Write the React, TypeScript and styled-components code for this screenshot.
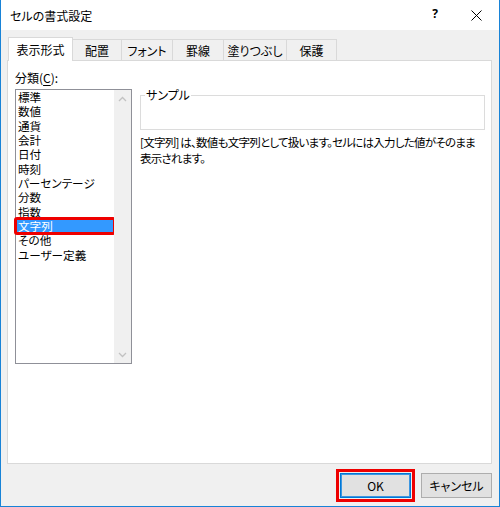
import React from "react";
import styled, { createGlobalStyle } from "styled-components";

const Global = createGlobalStyle`
  html, body { margin: 0; padding: 0; background: #ffffff; }
  body {
    font-family: "Noto Sans CJK JP", "Noto Sans", sans-serif;
    font-size: 12px;
    color: #000000;
  }
  * { box-sizing: border-box; }
`;

const Window = styled.div`
  width: 500px;
  height: 507px;
  display: flex;
  flex-direction: column;
  border: 1px solid #1883d7;
  border-top: none;
  background: #f0f0f0;
  font-feature-settings: "palt";
`;

const TitleBar = styled.div`
  height: 30px;
  flex: none;
  background: #ffffff;
  display: flex;
  align-items: center;
  padding-left: 9px;
`;

const Title = styled.div`
  flex: 1;
  font-size: 12px;
  line-height: 14px;
  margin-top: 1px;
`;

const TitleButton = styled.div<{ $w: number }>`
  width: ${(p) => p.$w}px;
  height: 30px;
  display: flex;
  align-items: center;
  justify-content: center;
`;

const Help = styled.span`
  font-family: "Noto Sans", sans-serif;
  font-size: 12px;
  font-weight: 700;
  line-height: 12px;
  margin-top: -2px;
`;

const Body = styled.div`
  flex: 1;
  display: flex;
  flex-direction: column;
  padding: 7px 7px 8px 6px;
`;

const TabRow = styled.div`
  height: 23px;
  flex: none;
  display: flex;
  align-items: flex-end;
  padding-left: 1px;
`;

const Tab = styled.div<{ $w: number; $active?: boolean }>`
  width: ${(p) => p.$w}px;
  height: ${(p) => (p.$active ? 24 : 21)}px;
  margin-bottom: ${(p) => (p.$active ? -1 : 0)}px;
  position: relative;
  z-index: ${(p) => (p.$active ? 1 : 0)};
  background: ${(p) => (p.$active ? "#ffffff" : "#f0f0f0")};
  border: 1px solid #d9d9d9;
  border-bottom: none;
  border-left: ${(p) => (p.$active ? "1px solid #d9d9d9" : "none")};
  display: flex;
  align-items: center;
  justify-content: center;
  padding-top: ${(p) => (p.$active ? 1 : 2)}px;
  font-size: 12px;
  line-height: 14px;
  white-space: nowrap;
`;

const Panel = styled.div`
  flex: 1;
  background: #ffffff;
  border: 1px solid #d9d9d9;
  display: flex;
  gap: 8px;
  padding: 9px 6px 0 7px;
`;

const LeftCol = styled.div`
  width: 117px;
  flex: none;
  display: flex;
  flex-direction: column;
`;

const Label = styled.div`
  line-height: 15px;
  font-size: 12px;
  white-space: nowrap;
  u { text-decoration: underline; text-underline-offset: 2px; }
`;

const ListBox = styled.div`
  margin-top: 4px;
  height: 275px;
  border: 1px solid #8f9098;
  background: #ffffff;
  display: flex;
`;

const Items = styled.div`
  flex: 1;
  display: flex;
  flex-direction: column;
`;

const Item = styled.div<{ $selected?: boolean }>`
  height: 14.33px;
  line-height: 14.33px;
  padding-left: 2px;
  font-size: 11.6px;
  white-space: nowrap;
  overflow: hidden;
  background: ${(p) => (p.$selected ? "#3399ff" : "transparent")};
  color: ${(p) => (p.$selected ? "#ffffff" : "#000000")};
  outline: ${(p) => (p.$selected ? "3px solid #ee0000" : "none")};
  outline-offset: -1px;
  border-radius: 1px;
`;

const ScrollBar = styled.div`
  width: 17px;
  flex: none;
  background: #f0f0f0;
  display: flex;
  flex-direction: column;
  justify-content: space-between;
`;

const ScrollArrow = styled.div`
  height: 17px;
  display: flex;
  align-items: center;
  justify-content: center;
`;

const RightCol = styled.div`
  width: 345px;
  flex: none;
  padding-top: 18px;
  display: flex;
  flex-direction: column;
`;

const SampleBox = styled.fieldset`
  margin: 0;
  padding: 0;
  height: 42px;
  border: 1px solid #dcdcdc;
  min-width: 0;
`;

const Legend = styled.legend`
  margin-left: 4px;
  padding: 0 1px;
  font-size: 12px;
  line-height: 14px;
`;

const Description = styled.div`
  margin-top: 5px;
  font-size: 11.5px;
  line-height: 15.5px;
  letter-spacing: -0.75px;
  white-space: nowrap;
`;

const Footer = styled.div`
  flex: none;
  margin-top: 9px;
  display: flex;
  justify-content: flex-end;
  gap: 10px;
`;

const Button = styled.button<{ $default?: boolean }>`
  width: 71px;
  height: 25px;
  margin: 0;
  padding: 0;
  font-family: "Noto Sans CJK JP", "Noto Sans", sans-serif;
  font-feature-settings: "palt";
  font-size: 12px;
  color: #000000;
  background: #e1e1e1;
  border: 1px solid ${(p) => (p.$default ? "#0078d7" : "#adadad")};
  box-shadow: ${(p) => (p.$default ? "inset 0 0 0 1px #3c96e0" : "none")};
  outline: ${(p) => (p.$default ? "3px solid #ee0000" : "none")};
  outline-offset: 1px;
  border-radius: 0;
`;

const Chevron = ({ up }: { up?: boolean }) => (
  <svg width="9" height="6" viewBox="0 0 9 6">
    <polyline
      points={up ? "1,5 4.5,1.5 8,5" : "1,1 4.5,4.5 8,1"}
      fill="none"
      stroke="#c2c2c2"
      strokeWidth="1.3"
    />
  </svg>
);

const CloseIcon = () => (
  <svg width="11" height="11" viewBox="0 0 11 11">
    <path d="M0.5 0.5 L10.5 10.5 M10.5 0.5 L0.5 10.5" stroke="#000" strokeWidth="1" />
  </svg>
);

const tabs: { label: string; w: number }[] = [
  { label: "表示形式", w: 65 },
  { label: "配置", w: 49 },
  { label: "フォント", w: 51 },
  { label: "罫線", w: 51 },
  { label: "塗りつぶし", w: 63 },
  { label: "保護", w: 50 },
];

const categories = [
  "標準",
  "数値",
  "通貨",
  "会計",
  "日付",
  "時刻",
  "パーセンテージ",
  "分数",
  "指数",
  "文字列",
  "その他",
  "ユーザー定義",
];

export default function App() {
  return (
    <>
      <Global />
      <Window>
        <TitleBar>
          <Title>セルの書式設定</Title>
          <TitleButton $w={38}>
            <Help>?</Help>
          </TitleButton>
          <TitleButton $w={45}>
            <CloseIcon />
          </TitleButton>
        </TitleBar>
        <Body>
          <TabRow>
            {tabs.map((t, i) => (
              <Tab key={t.label} $w={t.w} $active={i === 0}>
                {t.label}
              </Tab>
            ))}
          </TabRow>
          <Panel>
            <LeftCol>
              <Label>
                分類(<u>C</u>):
              </Label>
              <ListBox>
                <Items>
                  {categories.map((c) => (
                    <Item key={c} $selected={c === "文字列"}>
                      {c}
                    </Item>
                  ))}
                </Items>
                <ScrollBar>
                  <ScrollArrow>
                    <Chevron up />
                  </ScrollArrow>
                  <ScrollArrow>
                    <Chevron />
                  </ScrollArrow>
                </ScrollBar>
              </ListBox>
            </LeftCol>
            <RightCol>
              <SampleBox>
                <Legend>サンプル</Legend>
              </SampleBox>
              <Description>
                [文字列] は、数値も文字列として扱います。セルには入力した値がそのまま
                <br />
                表示されます。
              </Description>
            </RightCol>
          </Panel>
          <Footer>
            <Button $default>OK</Button>
            <Button>キャンセル</Button>
          </Footer>
        </Body>
      </Window>
    </>
  );
}
